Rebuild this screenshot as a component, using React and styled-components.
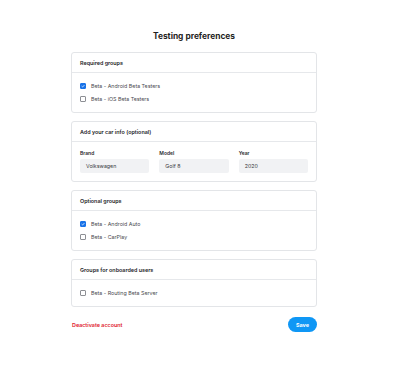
import React from "react";
import styled, { createGlobalStyle } from "styled-components";

const GlobalStyle = createGlobalStyle`
  body {
    margin: 0;
    background: #ffffff;
    font-family: Inter, "Noto Sans", sans-serif;
    color: #2a2a2e;
  }
`;

const Page = styled.div`
  width: 388px;
  padding-top: 30px;
`;

const Container = styled.div`
  width: 246px;
  margin: 0 auto;
  display: flex;
  flex-direction: column;
  gap: 8px;
`;

const Title = styled.h1`
  margin: 0 0 2px;
  font-size: 8.4px;
  line-height: 12px;
  font-weight: 700;
  text-align: center;
  color: #1f1f23;
`;

const Card = styled.section`
  border: 1px solid #e3e5e8;
  border-radius: 3px;
  background: #fff;
`;

const CardHeader = styled.div`
  height: 19px;
  display: flex;
  align-items: center;
  padding: 0 8px;
  border-bottom: 1px solid #e6e8eb;
  font-size: 5.4px;
  font-weight: 600;
  color: #26262a;
`;

const CardBody = styled.div`
  padding: 6px 8px 7px;
`;

const Row = styled.label`
  height: 13px;
  display: flex;
  align-items: center;
  gap: 5px;
  font-size: 5.3px;
  color: #4a4a50;
`;

const Box = styled.span`
  width: 6px;
  height: 6px;
  box-sizing: border-box;
  border-radius: 1px;
  border: 1px solid ${(p) => (p.$checked ? "#1a73e8" : "#8d8f94")};
  background: ${(p) => (p.$checked ? "#1a73e8" : "#fff")};
  display: flex;
  align-items: center;
  justify-content: center;
`;

const Grid = styled.div`
  display: grid;
  grid-template-columns: repeat(3, 1fr);
  gap: 10px;
  padding: 8px 8px 8px;
`;

const Field = styled.div`
  display: flex;
  flex-direction: column;
  gap: 3px;
`;

const Label = styled.span`
  font-size: 5px;
  line-height: 6px;
  font-weight: 600;
  color: #2a2a2e;
`;

const FieldValue = styled.div`
  height: 14px;
  background: #f1f2f4;
  border-radius: 2px;
  padding: 0 6px;
  display: flex;
  align-items: center;
  font-size: 5.3px;
  color: #3a3a40;
`;

const Footer = styled.div`
  display: flex;
  align-items: center;
  justify-content: space-between;
  margin-top: 2px;
`;

const Danger = styled.span`
  font-size: 5.4px;
  font-weight: 600;
  color: #e0182d;
  padding-left: 1px;
`;

const SaveButton = styled.button`
  width: 29px;
  height: 15px;
  border: none;
  border-radius: 8px;
  background: #0f97f5;
  color: #fff;
  font-family: inherit;
  font-size: 5.4px;
  font-weight: 700;
  padding: 0;
`;

function Check({ checked, label }) {
  return (
    <Row>
      <Box $checked={checked}>
        {checked && (
          <svg width="4" height="4" viewBox="0 0 10 10">
            <path d="M1.5 5.2 L4 7.6 L8.6 2.6" fill="none" stroke="#fff" strokeWidth="1.8" />
          </svg>
        )}
      </Box>
      {label}
    </Row>
  );
}

function Group({ title, items }) {
  return (
    <Card>
      <CardHeader>{title}</CardHeader>
      <CardBody>
        {items.map((item) => (
          <Check key={item.label} checked={item.checked} label={item.label} />
        ))}
      </CardBody>
    </Card>
  );
}

export default function App() {
  return (
    <Page>
      <GlobalStyle />
      <Container>
        <Title>Testing preferences</Title>
        <Group
          title="Required groups"
          items={[
            { label: "Beta - Android Beta Testers", checked: true },
            { label: "Beta - iOS Beta Testers", checked: false },
          ]}
        />
        <Card>
          <CardHeader>Add your car info (optional)</CardHeader>
          <Grid>
            <Field>
              <Label>Brand</Label>
              <FieldValue>Volkswagen</FieldValue>
            </Field>
            <Field>
              <Label>Model</Label>
              <FieldValue>Golf 8</FieldValue>
            </Field>
            <Field>
              <Label>Year</Label>
              <FieldValue>2020</FieldValue>
            </Field>
          </Grid>
        </Card>
        <Group
          title="Optional groups"
          items={[
            { label: "Beta - Android Auto", checked: true },
            { label: "Beta - CarPlay", checked: false },
          ]}
        />
        <Group
          title="Groups for onboarded users"
          items={[{ label: "Beta - Routing Beta Server", checked: false }]}
        />
        <Footer>
          <Danger>Deactivate account</Danger>
          <SaveButton>Save</SaveButton>
        </Footer>
      </Container>
    </Page>
  );
}
